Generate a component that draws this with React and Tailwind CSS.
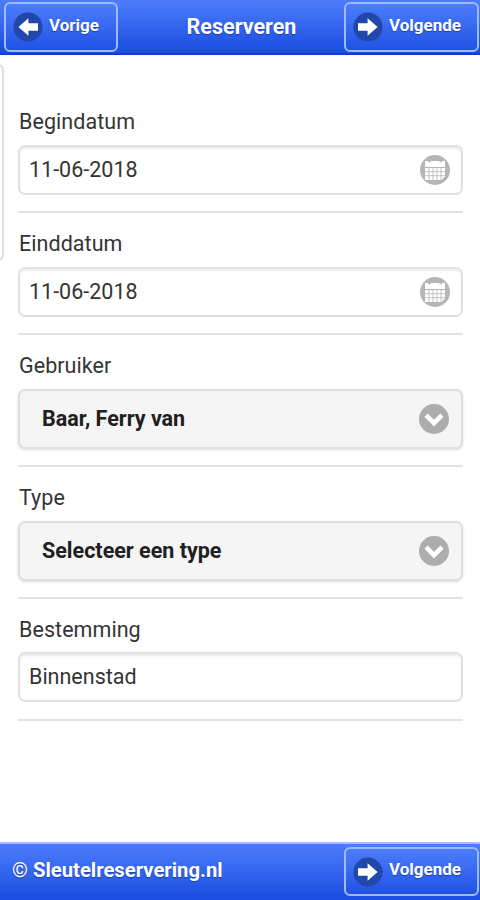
const barText = "font-bold text-white [text-shadow:0_1px_1px_#1c3fa8]";

function ArrowDisc({ left = false }) {
  return (
    <svg width="30" height="30" viewBox="0 0 30 30" className="shrink-0">
      <circle cx="15" cy="15" r="14.6" fill="#2147ab" />
      <path
        d="M5 11.3H14.6V6.2L24.6 15 14.6 23.8V18.7H5Z"
        fill="#fff"
        transform={left ? "rotate(180 15 15)" : undefined}
      />
    </svg>
  );
}

function ChevronDisc() {
  return (
    <svg width="30" height="30" viewBox="0 0 30 30" className="shrink-0">
      <circle cx="15" cy="15" r="15" fill="#adadad" />
      <path d="M7 11.2L15 19.2 23 11.2" fill="none" stroke="#fff" strokeWidth="4.6" />
    </svg>
  );
}

function CalendarDisc() {
  return (
    <svg width="30" height="30" viewBox="0 0 30 30" className="shrink-0">
      <circle cx="15" cy="15" r="15" fill="#b5b5b5" />
      <path d="M5 6H8.2V7.3H10.5V6H19.5V7.3H21.8V6H25V12H5Z" fill="#fff" />
      <path d="M5 13H25V21.5L21.5 25H5Z" fill="#fff" />
      <path
        d="M5 16.7H25M5 20.7H25M9 13V25M13 13V25M17 13V25M21 13V25"
        stroke="#b5b5b5"
        strokeWidth="0.8"
      />
    </svg>
  );
}

function NavButton({ children, left, className }) {
  return (
    <button
      className={`flex items-center rounded-[6px] border-2 border-[#9dbbf9] bg-linear-to-b from-[#4d7cfb] to-[#2052e5] pl-[7px] text-[17px] ${barText} ${className}`}
    >
      <ArrowDisc left={left} />
      <span className="ml-[6px] pb-[3px]">{children}</span>
    </button>
  );
}

function Section({ label, children }) {
  return (
    <div className="border-b-2 border-[#e2e2e2] pb-4">
      <label className="block h-[54px] pt-[19px] pl-px text-[21.5px] leading-6 tracking-[0.05px]">{label}</label>
      {children}
    </div>
  );
}

function InputBox({ children, icon }) {
  return (
    <div className="flex h-[50px] items-center justify-between rounded-[7px] border-2 border-[#e1e1e1] bg-white pr-[11px] pl-[9px] text-[21.5px] text-[#343434] shadow-[inset_0_2px_2px_#ececec]">
      <span>{children}</span>
      {icon}
    </div>
  );
}

function SelectBox({ children }) {
  return (
    <div className="flex h-[60px] items-center justify-between rounded-[7px] border-2 border-[#dfdfdf] bg-[#f5f5f5] pr-[12px] pl-[22px] text-[21.5px] font-bold text-[#202020] shadow-[0_1px_3px_#dddddd]">
      <span>{children}</span>
      <ChevronDisc />
    </div>
  );
}

export default function App() {
  return (
    <div className="flex h-[900px] w-[480px] flex-col overflow-hidden bg-white font-['Roboto','Liberation_Sans',sans-serif] text-[#343434]">
      <header className="flex h-[55px] shrink-0 items-start justify-between border-b-2 border-[#0e3fd1] bg-linear-to-b from-[#4d7cfb] to-[#194be1] pt-[2px] pl-1">
        <NavButton left className="h-[50px] w-[114px]">Vorige</NavButton>
        <h1 className={`pt-[10px] pl-[21px] text-[21.5px] leading-[30px] ${barText}`}>Reserveren</h1>
        <NavButton className="mr-[1px] h-[50px] w-[135px]">Volgende</NavButton>
      </header>
      <main className="flex flex-1 items-start">
        <div className="mt-[9px] -ml-1 h-[197px] w-2 rounded-r-[6px] border-2 border-[#dddddd]" />
        <form className="mt-9 ml-[14px] w-[445px]">
          <Section label="Begindatum">
            <InputBox icon={<CalendarDisc />}>11-06-2018</InputBox>
          </Section>
          <Section label="Einddatum">
            <InputBox icon={<CalendarDisc />}>11-06-2018</InputBox>
          </Section>
          <Section label="Gebruiker">
            <SelectBox>Baar, Ferry van</SelectBox>
          </Section>
          <Section label="Type">
            <SelectBox>Selecteer een type</SelectBox>
          </Section>
          <Section label="Bestemming">
            <div className="-mt-px mb-px">
              <InputBox>Binnenstad</InputBox>
            </div>
          </Section>
        </form>
      </main>
      <footer className="flex h-[58px] shrink-0 items-start justify-between border-t-2 border-[#a9bdf1] bg-linear-to-b from-[#4d7cfb] to-[#194be1] pt-[3px] pl-3">
        <p className={`pt-[8px] text-[20.25px] leading-[30px] ${barText}`}>© Sleutelreservering.nl</p>
        <NavButton className="mr-[1px] h-[49px] w-[135px]">Volgende</NavButton>
      </footer>
    </div>
  );
}
